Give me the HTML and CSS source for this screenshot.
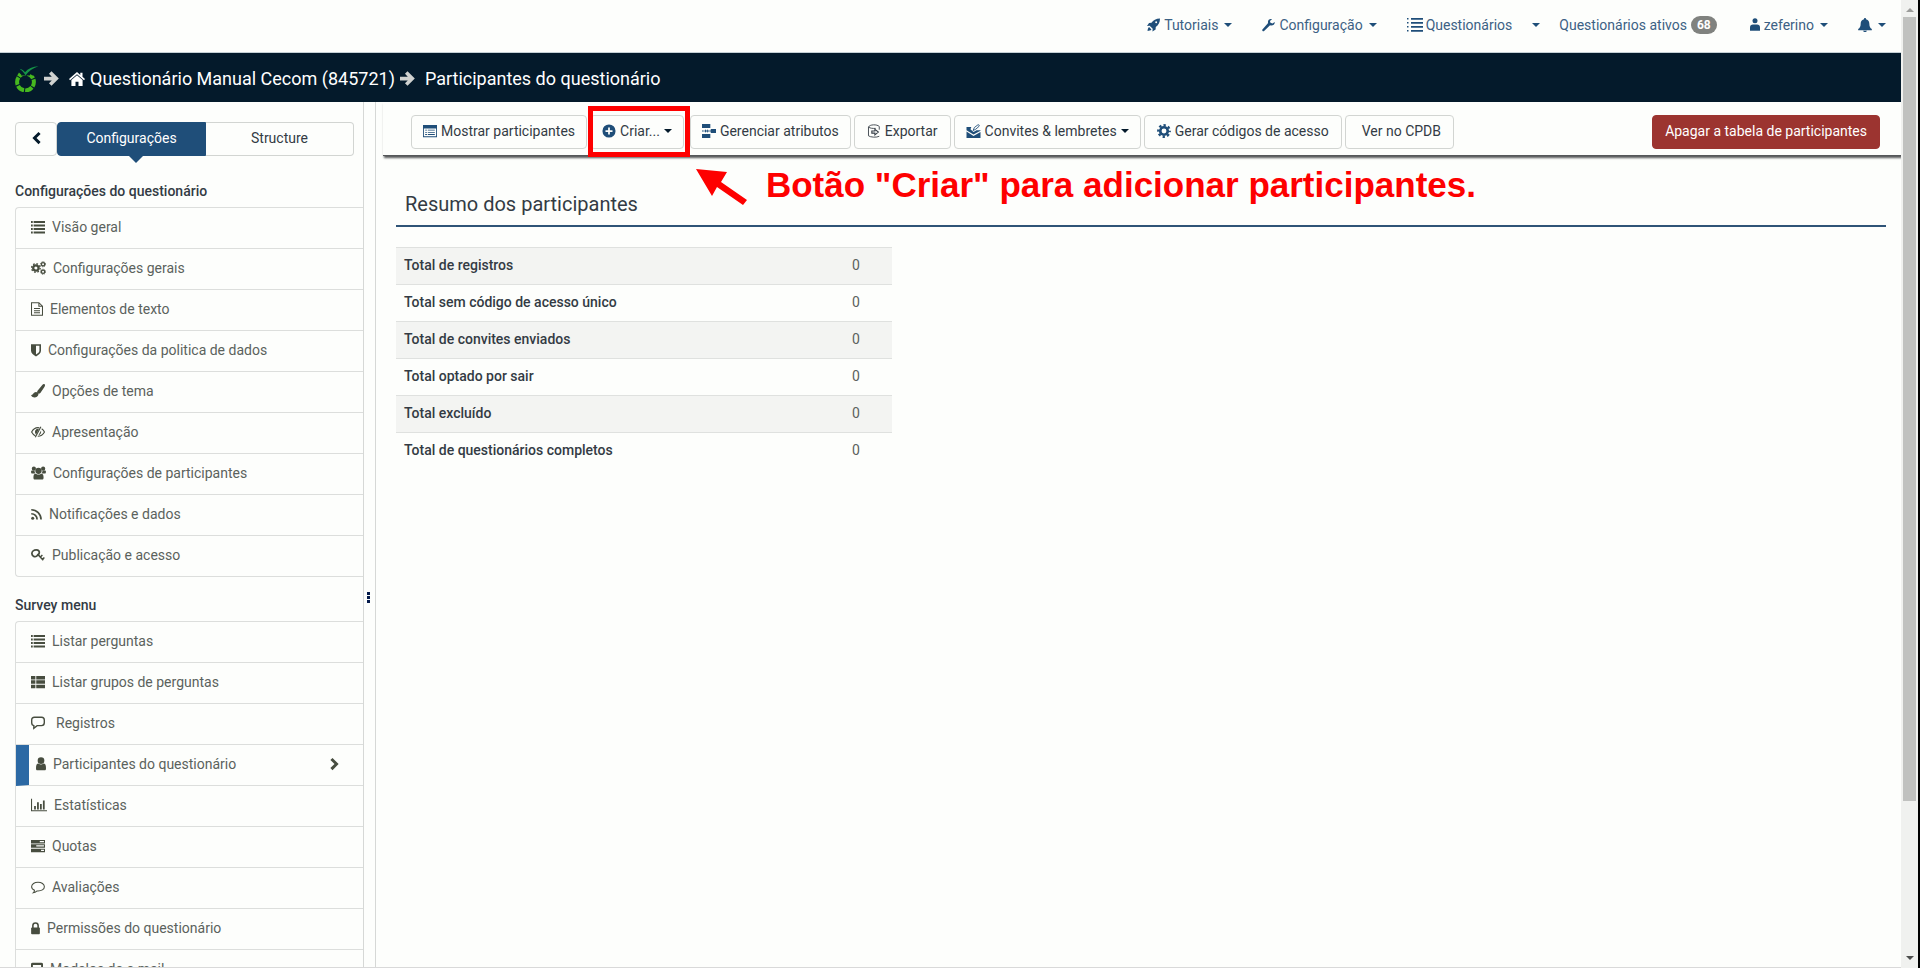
FILE: index.html
```html
<!DOCTYPE html>
<html lang="pt-BR">
<head>
<meta charset="utf-8">
<title>Participantes do questionário</title>
<link rel="stylesheet" href="styles.css">
</head>
<body>
<svg class="sprite" aria-hidden="true">
  <symbol id="rocket" viewBox="0 0 16 16"><path d="M16 0c-5 0-8.200 2-10.500 5.200L2.500 5.400 0 9.300l3.300-.300L7 12.700 6.700 16l3.900-2.500.200-3C14 8.200 16 5 16 0zM12.500 4.700a1.200 1.200 0 1 1-2.400 0 1.200 1.200 0 0 1 2.400 0zM2.500 10.500C1.300 11.500.800 13.500.700 15.300 2.500 15.200 4.500 14.700 5.500 13.500z"/></symbol>
  <symbol id="wrench" viewBox="0 0 16 16"><path d="M15.600 4.200 13 6l-2.600-.7-.6-2.200 2.500-2.200C9.500-.300 6.500 2.300 7.500 5.500L.500 13.400c-.9 1.300.8 3 2.100 2.100l7.300-7.200c3.200 1.200 6.200-1.400 5.700-4.100z"/></symbol>
  <symbol id="list" viewBox="0 0 16 16"><path d="M0 1h2v2.300H0zM3 1h13v2.300H3zM0 5h2v2.300H0zM3 5h13v2.300H3zM0 9h2v2.300H0zM3 9h13v2.300H3zM0 13h2v2.300H0zM3 13h13v2.300H3z"/></symbol>
  <symbol id="list-thin" viewBox="0 0 16 16"><path d="M0 1h1.500v1.500H0zM4 1h12v1.800H4zM0 5h1.500v1.500H0zM4 5h12v1.800H4zM0 9h1.500v1.500H0zM4 9h12v1.800H4zM0 13h1.500v1.500H0zM4 13h12v1.800H4z"/></symbol>
  <symbol id="th-list" viewBox="0 0 16 16"><path d="M0 1h5v4H0zM6 1h10v4H6zM0 6h5v4H0zM6 6h10v4H6zM0 11h5v4H0zM6 11h10v4H6z"/></symbol>
  <symbol id="user" viewBox="0 0 12 16"><circle cx="6" cy="4" r="4"/><path d="M0 13c0-4 1-5.500 3-5.500 2 1.500 4 1.500 6 0 2 0 3 1.500 3 5.500 0 2-.5 2.500-2 2.500H2c-1.500 0-2-.5-2-2.500z"/></symbol>
  <symbol id="person" viewBox="0 0 12 16"><circle cx="6" cy="3" r="3"/><path d="M0 15v-4c0-2.500 1.500-3.500 3.500-3.500h5C10.500 7.500 12 8.500 12 11v4z"/></symbol>
  <symbol id="bell" viewBox="0 0 16 16"><path d="M8 0c.8 0 1.300.6 1.200 1.400C12 2 13 4.300 13 7c0 2.500.9 4.200 2.800 5.500V14H.2v-1.500C2.100 11.200 3 9.500 3 7c0-2.700 1-5 3.800-5.600C6.700.6 7.200 0 8 0zM5.800 14.500h4.400c-.3 2-4.100 2-4.400 0z"/></symbol>
  <symbol id="arrow-right" viewBox="0 0 16 16"><path d="M0 6h8.300L5.300 3 8 .300 15.800 8 8 15.700 5.300 13l3-3H0z"/></symbol>
  <symbol id="home" viewBox="0 0 16 16"><path d="M8 1 0 8l1 1.200L8 3.200l7 6L16 8l-2.500-2.200V1.700h-2.200v2.200zM8 4.300l-5.600 4.800V15h4.100v-4.300h3V15h4.100V9.100z"/></symbol>
  <symbol id="chevron-left" viewBox="0 0 10 16"><path d="M7.300 1 9.700 3.300 5 8l4.700 4.700L7.300 15 .300 8z"/></symbol>
  <symbol id="chevron-right" viewBox="0 0 10 16"><path d="M2.700 1 .300 3.300 5 8 .300 12.700 2.700 15l7-7z"/></symbol>
  <symbol id="cogs" viewBox="0 0 17 16"><circle cx="5.500" cy="8" r="3.100" fill="none" stroke="currentColor" stroke-width="2.600"/><circle cx="5.500" cy="8" r="4.900" fill="none" stroke="currentColor" stroke-width="1.500" stroke-dasharray="1.900 1.950"/><circle cx="13.700" cy="3.700" r="1.900" fill="none" stroke="currentColor" stroke-width="1.500"/><circle cx="13.700" cy="3.700" r="2.900" fill="none" stroke="currentColor" stroke-dasharray="1.300 1"/><circle cx="13.700" cy="12.300" r="1.900" fill="none" stroke="currentColor" stroke-width="1.500"/><circle cx="13.700" cy="12.300" r="2.900" fill="none" stroke="currentColor" stroke-dasharray="1.300 1"/></symbol>
  <symbol id="cog" viewBox="0 0 16 16"><circle cx="8" cy="8" r="4.300" fill="none" stroke="currentColor" stroke-width="3"/><circle cx="8" cy="8" r="6.600" fill="none" stroke="currentColor" stroke-width="2.600" stroke-dasharray="2.700 2.480" stroke-dashoffset="1.350"/></symbol>
  <symbol id="file" viewBox="0 0 14 16"><path d="M.6.6h8.600l4.200 4.200v10.600H.6zM9.200.6v4.200h4.200M3.500 7.500h7M3.500 10h7M3.500 12.500h7" fill="none" stroke="currentColor" stroke-width="1.200"/></symbol>
  <symbol id="shield" viewBox="0 0 12 16"><path fill-rule="evenodd" d="M0 1h12v8c0 3-3 5.300-6 6.700C3 14.300 0 12 0 9zm6 2v10.400C8.500 12 10.100 10.500 10.100 8.900V3z"/></symbol>
  <symbol id="brush" viewBox="0 0 16 16"><path d="M15.500.4c.9.7.5 1.700 0 2.600l-4.800 7.200c-.9 1-2 1.200-2.900.5s-1-1.900-.3-2.900L12.900 1.200c.8-.9 1.700-1.400 2.600-.8zM5.600 9.200c1.800.3 2.900 1.600 2.900 3.100C7.500 15.500 2 17 0 12.500c2.500.8 2.500-3.300 5.600-3.300z"/></symbol>
  <symbol id="eye-slash" viewBox="0 0 16 16"><path d="M9.500 3.200C5.800 2.500 2.800 4.300.7 8c1 1.900 2.400 3.400 4.100 4.200M12.200 4.400c1.300.8 2.400 2 3.200 3.600-1.800 3.300-4.400 4.900-7.700 4.900M11.300 2 4.900 14" fill="none" stroke="currentColor" stroke-width="1.300"/><path d="M9.200 4.300C6 3.700 4.200 6 4.600 8.500c.2 1.200.7 1.900 1.200 2.500zM11.500 6.300c.7 3-1 4.900-3 5.400z"/></symbol>
  <symbol id="users" viewBox="0 0 17 16"><circle cx="3.200" cy="3" r="2.400"/><circle cx="13.800" cy="3" r="2.400"/><path d="M0 6.500c0-1.500 1-1.800 4-1 0 1.500.3 2.300 1 3.200H1.500C.4 8.700 0 8 0 6.500zM17 6.500c0-1.500-1-1.800-4-1 0 1.500-.3 2.300-1 3.200h3.500c1.100 0 1.500-.7 1.500-2.200z"/><circle cx="8.500" cy="5.500" r="3.600"/><path d="M2.700 13c0-3 .8-4.200 2.800-4.200 2 1.400 4 1.400 6 0 2 0 2.800 1.200 2.800 4.200 0 1.800-.6 2.500-2 2.500H4.700c-1.400 0-2-.7-2-2.500z"/></symbol>
  <symbol id="rss" viewBox="0 0 13 16"><circle cx="2" cy="13" r="1.800"/><path d="M.3 7.700c4 0 6.900 2.900 6.900 6.900M.3 3c6.500 0 11.600 5 11.600 11.600" fill="none" stroke="currentColor" stroke-width="2"/></symbol>
  <symbol id="key" viewBox="0 0 16 16"><path d="M6.500 9.300C4 10.900 1 8.800 1 6.300 1 3.800 3.500 2 6 2s4.300 1.800 3.200 4.500z" fill="none" stroke="currentColor" stroke-width="2"/><path d="m7.500 7 6.500 7M10.500 10.500l2.500-2.400M13 13l2.300-2.200" fill="none" stroke="currentColor" stroke-width="1.700"/></symbol>
  <symbol id="comment-square" viewBox="0 0 16 16"><path d="M4 1.500h8c2.200 0 3.200 1.300 3.200 3.200v3.100c0 2-1 3.200-3.200 3.200H7L3.200 14v-3C1.500 10.700.8 9.600.8 7.800V4.700c0-1.900 1-3.200 3.200-3.200z" fill="none" stroke="currentColor" stroke-width="1.600"/></symbol>
  <symbol id="comment" viewBox="0 0 16 16"><path d="M8 2.500c4 0 7.300 2.200 7.300 5.200S12 12.800 7 12.500c-1.300 1.100-2.800 2-4.500 2.100 1-.9 1.500-1.800 1.500-3C2 10.900.7 9.500.7 7.700.7 4.700 4 2.500 8 2.500z" fill="none" stroke="currentColor" stroke-width="1.200"/></symbol>
  <symbol id="chart" viewBox="0 0 18 16"><path d="M0 1h1.200v12.800H18V15H0zM3.500 9h2v4h-2zM6.800 5h2v8h-2zM10.100 7h2v6h-2zM13.400 3h2v10h-2z"/></symbol>
  <symbol id="tasks" viewBox="0 0 16 16"><path fill-rule="evenodd" d="M0 1h16v4H0zM10 2.200h4.800v1.500H10zM0 6h16v4H0zM6 7.200h8.800v1.500H6zM0 11h16v4H0zM11.500 12.200h3.300v1.500h-3.300z"/></symbol>
  <symbol id="lock" viewBox="0 0 10 16"><path d="M2 8V5.200C2 1.200 8 1.200 8 5.200V8" fill="none" stroke="currentColor" stroke-width="1.800"/><rect y="7.500" width="10" height="7.500" rx="1"/></symbol>
  <symbol id="mail" viewBox="0 0 14 16"><rect x="1" y="2" width="12" height="11" rx="1" fill="none" stroke="currentColor" stroke-width="2.400"/><path d="M3 7h8v2H3z"/></symbol>
  <symbol id="table" viewBox="0 0 16 14"><path fill-rule="evenodd" d="M0 0h16v14H0zM1 4h14v9H1zM2.500 5.500h2v1h-2zM5.500 5.500h8v1h-8zM2.500 8h2v1h-2zM5.500 8h8v1h-8zM2.500 10.500h2v1h-2zM5.500 10.500h8v1h-8z"/></symbol>
  <symbol id="plus-circle" viewBox="0 0 16 16"><path fill-rule="evenodd" d="M8 .5a7.500 7.500 0 1 1 0 15A7.500 7.500 0 0 1 8 .5zM7 4v3H4v2h3v3h2V9h3V7H9V4z"/></symbol>
  <symbol id="attributes" viewBox="0 0 16 16"><path d="M0 0h9.500v4.500H0zM0 11.500h9.500V16H0zM10 5.800h6v4.400h-6zM0 7.400h2v1.200H0zM2.500 8l2-2v1.400h1.500V6l2 2-2 2V8.600H4.500V10zM8.300 7.400H10v1.200H8.300z"/></symbol>
  <symbol id="export" viewBox="0 0 14 16"><path d="M.7 3.500v10c2 1.700 9.500 2.200 12.300.5M.7 3.500C2 .3 10.500.2 13 2.800v3.700M.7 3.500c2 1.500 5 1.700 8.300 1.500" fill="none" stroke="currentColor"/><path d="M4.500 8H8V6l4 3.200-4 3.200v-2H4.500z" fill="none" stroke="currentColor" stroke-width="1.200"/></symbol>
  <symbol id="invite" viewBox="0 0 16 16"><path d="M0 3.500h5.500l-1 2.500L8 9l3.500-2H16v.6L8 12 0 7zM0 8.700l8 5L16 9.200V16H0z"/><path d="M7.500 7.500 9 4l4-3c1.500-.5 2 .5 1.300 1.700L10.500 6z" fill="none" stroke="currentColor"/></symbol>
</svg>

<div class="page">
  <nav class="topnav" aria-label="Principal">
    <a class="nav-link" href="#"><svg class="icon i13"><use href="#rocket"/></svg><span>Tutoriais</span><i class="caret"></i></a>
    <a class="nav-link" href="#"><svg class="icon i13"><use href="#wrench"/></svg><span>Configuração</span><i class="caret"></i></a>
    <a class="nav-link list-link" href="#"><svg class="icon i16"><use href="#list-thin"/></svg><span>Questionários</span></a>
    <a class="nav-link caret-only" href="#" aria-label="Mais questionários"><i class="caret"></i></a>
    <a class="nav-link" href="#"><span>Questionários ativos</span><span class="badge">68</span></a>
    <a class="nav-link account" href="#"><svg class="icon i10"><use href="#person"/></svg><span>zeferino</span><i class="caret"></i></a>
    <a class="nav-link" href="#" aria-label="Notificações"><svg class="icon i14"><use href="#bell"/></svg><i class="caret"></i></a>
  </nav>

  <header class="titlebar">
    <svg class="logo" viewBox="0 0 24 26" aria-hidden="true"><circle cx="10.500" cy="16" r="8.400" fill="none" stroke="#46b81f" stroke-width="4" stroke-dasharray="7.700 1.100" stroke-dashoffset="3"/><path d="M2 3h18v6.500H2z" fill="#041a2b"/><path d="M4 6.500 2.200 9.500 5 11l1.500-2zM15.500 8 19 11l-2.500 1.500-2-2z" fill="#46b81f"/><path d="M4.500 2.700C7 3 8.700 4.300 10 6.200 13 2.500 17.500.5 23.500.2 17.500 2.200 13.500 5 10.500 9.500 9 6.500 7.200 4.500 4.500 2.700z" fill="#159447"/></svg>
    <svg class="icon i15 crumb-arrow"><use href="#arrow-right"/></svg>
    <a class="crumb" href="#"><svg class="icon i16"><use href="#home"/></svg><span>Questionário Manual Cecom (845721)</span></a>
    <svg class="icon i15 crumb-arrow"><use href="#arrow-right"/></svg>
    <span class="current">Participantes do questionário</span>
  </header>

  <div class="columns">
    <aside class="sidebar">
      <div class="tabs">
        <button class="tab back" type="button" aria-label="Recolher"><svg class="icon chev"><use href="#chevron-left"/></svg></button>
        <button class="tab active" type="button">Configurações</button>
        <button class="tab last" type="button">Structure</button>
      </div>
      <h2 class="menu-title">Configurações do questionário</h2>
      <div class="menu">
        <a class="item" href="#"><svg class="icon i14"><use href="#list"/></svg>Visão geral</a>
        <a class="item" href="#"><svg class="icon i15"><use href="#cogs"/></svg>Configurações gerais</a>
        <a class="item" href="#"><svg class="icon i12"><use href="#file"/></svg>Elementos de texto</a>
        <a class="item" href="#"><svg class="icon i10"><use href="#shield"/></svg>Configurações da politica de dados</a>
        <a class="item" href="#"><svg class="icon i14"><use href="#brush"/></svg>Opções de tema</a>
        <a class="item" href="#"><svg class="icon i14"><use href="#eye-slash"/></svg>Apresentação</a>
        <a class="item" href="#"><svg class="icon i15"><use href="#users"/></svg>Configurações de participantes</a>
        <a class="item" href="#"><svg class="icon i11"><use href="#rss"/></svg>Notificações e dados</a>
        <a class="item" href="#"><svg class="icon i14"><use href="#key"/></svg>Publicação e acesso</a>
      </div>
      <h2 class="menu-title second">Survey menu</h2>
      <div class="menu">
        <a class="item" href="#"><svg class="icon i14"><use href="#list"/></svg>Listar perguntas</a>
        <a class="item" href="#"><svg class="icon i14"><use href="#th-list"/></svg>Listar grupos de perguntas</a>
        <a class="item wide" href="#"><svg class="icon i14"><use href="#comment-square"/></svg>Registros</a>
        <a class="item selected" href="#"><svg class="icon i10"><use href="#user"/></svg>Participantes do questionário<svg class="icon chev"><use href="#chevron-right"/></svg></a>
        <a class="item" href="#"><svg class="icon i16"><use href="#chart"/></svg>Estatísticas</a>
        <a class="item" href="#"><svg class="icon i14"><use href="#tasks"/></svg>Quotas</a>
        <a class="item" href="#"><svg class="icon i14"><use href="#comment"/></svg>Avaliações</a>
        <a class="item" href="#"><svg class="icon i9"><use href="#lock"/></svg>Permissões do questionário</a>
        <a class="item" href="#"><svg class="icon i12"><use href="#mail"/></svg>Modelos de e-mail</a>
      </div>
    </aside>
    <div class="resizer"><span class="grip"></span></div>

    <main class="content">
      <div class="toolbar">
        <button class="btn" type="button"><svg class="icon i14"><use href="#table"/></svg>Mostrar participantes</button>
        <div class="highlight">
          <button class="btn" type="button"><svg class="icon i14"><use href="#plus-circle"/></svg>Criar...<i class="caret"></i></button>
          <div class="note">
            <svg class="pointer" viewBox="0 0 52 36" aria-hidden="true"><path d="M0 0 31 3 25 13 51 31 47 36 21 18 16 27z"/></svg>
            <span>Botão "Criar" para adicionar participantes.</span>
          </div>
        </div>
        <button class="btn" type="button"><svg class="icon i14"><use href="#attributes"/></svg>Gerenciar atributos</button>
        <button class="btn roomy export" type="button"><svg class="icon i14"><use href="#export"/></svg>Exportar</button>
        <button class="btn" type="button"><svg class="icon i15"><use href="#invite"/></svg>Convites &amp; lembretes<i class="caret"></i></button>
        <button class="btn roomy" type="button"><svg class="icon i14"><use href="#cog"/></svg>Gerar códigos de acesso</button>
        <button class="btn plain" type="button">Ver no CPDB</button>
        <button class="btn roomy danger" type="button">Apagar a tabela de participantes</button>
      </div>
      <h1 class="heading">Resumo dos participantes</h1>
      <table class="summary">
        <tbody>
          <tr><th scope="row">Total de registros</th><td>0</td></tr>
          <tr><th scope="row">Total sem código de acesso único</th><td>0</td></tr>
          <tr><th scope="row">Total de convites enviados</th><td>0</td></tr>
          <tr><th scope="row">Total optado por sair</th><td>0</td></tr>
          <tr><th scope="row">Total excluído</th><td>0</td></tr>
          <tr><th scope="row">Total de questionários completos</th><td>0</td></tr>
        </tbody>
      </table>
    </main>
  </div>
</div>
<div class="scrollbar" aria-hidden="true"><i class="up"></i><div class="thumb"></div><i class="down"></i></div>
</body>
</html>
```
FILE: styles.css
```css
* { box-sizing: border-box; }

body {
  margin: 0;
  height: 100vh;
  display: flex;
  overflow: hidden;
  border-right: 2px solid #000;
  background: #fdfefc;
  color: #333b44;
  font: 14px/20px Roboto, sans-serif;
}

a { color: inherit; text-decoration: none; }
button { font: inherit; color: inherit; cursor: pointer; }

.sprite { position: absolute; width: 0; height: 0; }
.icon { flex: none; height: 14px; fill: currentColor; }
.i9 { width: 9px; }
.i10 { width: 10px; }
.i11 { width: 11px; }
.i12 { width: 12px; }
.i13 { width: 13px; }
.i14 { width: 14px; }
.i15 { width: 15px; }
.i16 { width: 16px; height: 16px; }
.chev { width: 9px; }

.caret {
  border: 4px solid transparent;
  border-top-color: currentColor;
  border-bottom: 0;
}

.page {
  flex: 1;
  min-width: 0;
  display: flex;
  flex-direction: column;
  border-bottom: 1px solid #d9d9d9;
}

/* Top navigation */
.topnav {
  flex: none;
  height: 53px;
  padding-bottom: 2px;
  display: flex;
  justify-content: flex-end;
  border-bottom: 1px solid #c5d0d6;
  color: #1f4e79;
}
.nav-link { display: flex; align-items: center; gap: 4px; padding: 0 15px; }
.nav-link span { color: #3c6184; }
.nav-link .caret { margin-left: 2px; }
.list-link { gap: 3px; }
.caret-only { padding: 0 4px 0 3px; }
.account { padding-left: 18px; }
.nav-link .badge {
  padding: 0 6px;
  border-radius: 9px;
  background: #80827f;
  color: #fff;
  font-size: 12px;
  font-weight: 700;
  line-height: 18px;
}

/* Title bar */
.titlebar {
  flex: none;
  height: 49px;
  padding: 2px 0 0 15px;
  display: flex;
  align-items: center;
  gap: 5px;
  background: #041a2b;
  color: #fff;
  font-size: 18px;
}
.logo { width: 24px; height: 26px; }
.crumb-arrow { color: #d0d2d0; height: 15px; }
.crumb { display: flex; align-items: center; gap: 5px; margin-left: 5px; }
.current { margin-left: 5px; }

.columns { flex: 1; min-height: 0; display: flex; }

/* Side menu */
.sidebar {
  flex: none;
  width: 364px;
  padding: 20px 0 0 15px;
  overflow: hidden;
  border-right: 1px solid #d6d8d6;
}
.tabs { display: flex; margin-right: 9px; }
.tab {
  flex: 1;
  height: 34px;
  padding: 0 0 2px;
  display: flex;
  align-items: center;
  justify-content: center;
  border: 1px solid #d2d5d2;
  background: #fdfefc;
}
.tab.back { flex: 0 0 42px; border-radius: 4px; color: #041a2b; }
.tab.active {
  position: relative;
  border-color: #1f4e79;
  border-radius: 4px 0 0 4px;
  background: #1f4e79;
  color: #fff;
}
.tab.active::after {
  content: "";
  position: absolute;
  top: 100%;
  left: calc(50% - 4px);
  margin-left: 0;
  border: 8px solid transparent;
  border-top-color: #1f4e79;
  border-bottom: 0;
}
.tab.last { border-left: 0; border-radius: 0 4px 4px 0; }
.menu-title { margin: 25px 0 6px; font-size: 14px; line-height: 20px; font-weight: 500; }
.menu-title.second { margin: 18px 0 6px; }
.menu {
  border: 1px solid #dcdedc;
  border-right: 0;
  border-radius: 4px 0 0 4px;
  overflow: hidden;
  color: #5b625d;
}
.item {
  height: 41px;
  padding: 0 0 2px 15px;
  display: flex;
  align-items: center;
  gap: 7px;
  border-bottom: 1px solid #dcdedc;
}
.item:last-child { height: 40px; border-bottom: 0; }
.item .icon { color: #474d3f; }
.item.wide { gap: 11px; }
.item.selected { padding-left: 7px; border-left: 13px solid #2c69a4; }
.item.selected .chev { margin: 0 24px 0 auto; }

.resizer { flex: none; width: 12px; padding-top: 490px; border-right: 1px solid #d6d8d6; }
.grip {
  display: block;
  width: 3px;
  height: 11px;
  margin-left: 3px;
  background: repeating-linear-gradient(#041a4b 0 3px, transparent 3px 4px);
}

/* Main area */
.content { flex: 1; min-width: 0; padding-left: 7px; }
.toolbar {
  height: 54px;
  padding: 13px 21px 7px 28px;
  display: flex;
  gap: 3px;
  border-bottom: 1px solid #555759;
  box-shadow: 1px 2px 2px #555759;
}
.btn {
  height: 34px;
  padding: 0 11px 2px;
  display: flex;
  align-items: center;
  gap: 4px;
  border: 1px solid #d2d5d2;
  border-radius: 4px;
  background: #fdfefc;
  white-space: nowrap;
}
.btn .icon { color: #1f4e79; }
.btn .caret { color: #041a2b; }
.btn.roomy { padding: 0 12px 2px; }
.btn.export .icon { color: #333b44; }
.btn.plain { padding: 0 12px 2px 16px; }
.btn.danger { margin-left: auto; border-color: #9c3430; background: #9c3430; color: #fff; }

/* Annotation over the toolbar */
.highlight { position: relative; margin-right: 3px; }
.highlight::before {
  content: "";
  position: absolute;
  inset: -9px -6px -9px -2px;
  border: 5px solid #fe0000;
  pointer-events: none;
}
.note {
  position: absolute;
  top: 54px;
  left: calc(100% + 12px);
  display: flex;
  gap: 18px;
  color: #fe0000;
  font: bold 35px/36px "Liberation Sans", Arial, sans-serif;
  white-space: nowrap;
}
.note span { margin-top: -2px; }
.pointer { width: 52px; height: 36px; fill: currentColor; }

.heading {
  margin: 34px 15px 20px 13px;
  padding: 0 9px 7px;
  border-bottom: 2px solid #2f5477;
  font-size: 20px;
  line-height: 28px;
  font-weight: 400;
}
.summary { width: calc(33% - 5px); margin-left: 13px; border-collapse: collapse; }
.summary th, .summary td { padding: 7px 8px 9px; border-top: 1px solid #dfe1df; text-align: left; }
.summary th { font-weight: 500; }
.summary td { width: 48px; color: #5b625d; }
.summary tr:nth-child(odd) { background: #f3f4f2; }

/* Window scrollbar */
.scrollbar {
  flex: none;
  width: 17px;
  padding: 8px 2px;
  display: flex;
  flex-direction: column;
  align-items: center;
  background: #f0f1ef;
}
.up { border: 4px solid transparent; border-top: 0; border-bottom-color: #9b9c9a; }
.down { margin-top: auto; border: 4px solid transparent; border-bottom: 0; border-top-color: #4c4d4c; }
.thumb { width: 100%; height: calc(82% + 3px); margin-top: 5px; background: #c0c1bf; }
```
